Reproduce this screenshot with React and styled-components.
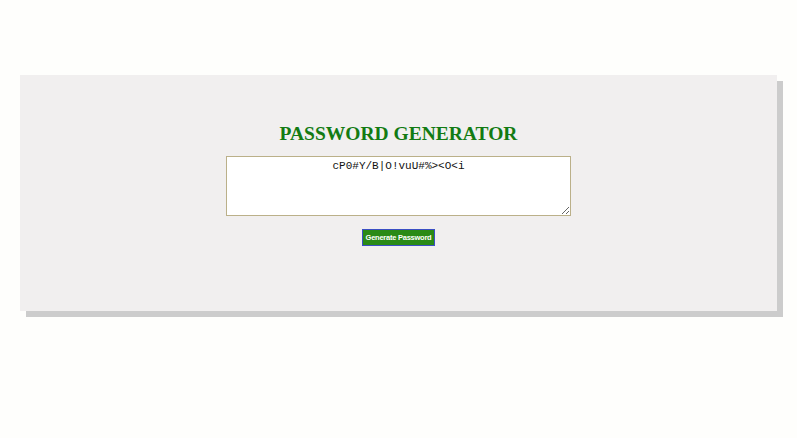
import React, { useState } from "react";
import styled, { createGlobalStyle } from "styled-components";

const GlobalStyle = createGlobalStyle`
  html, body {
    margin: 0;
    min-height: 100%;
    background: #fefefc;
    font-family: "Liberation Serif", serif;
  }
  #root {
    min-height: 100vh;
    padding-top: 75px;
    padding-bottom: 20px;
    box-sizing: border-box;
  }
`;

const Card = styled.div`
  margin: 0 20px;
  height: 236px;
  box-sizing: border-box;
  padding-top: 48px;
  background: #f1efef;
  box-shadow: 6px 6px 0 0 #cccccc;
  display: flex;
  flex-direction: column;
  align-items: center;
`;

const Title = styled.h1`
  margin: 0 0 11px 0;
  font-family: "Liberation Serif", "Times New Roman", serif;
  font-size: 19.5px;
  line-height: 22px;
  font-weight: bold;
  color: #137b13;
`;

const Output = styled.textarea`
  width: 345px;
  height: 60px;
  box-sizing: border-box;
  border: 1px solid #bbb089;
  background: #ffffff;
  font-family: "Liberation Mono", "Courier New", monospace;
  font-size: 11px;
  text-align: center;
  color: #111;
  padding: 3px 2px;
  margin: 0;
  resize: vertical;
`;

const GenButton = styled.button`
  margin-top: 13px;
  width: 73px;
  height: 17px;
  padding: 0;
  background: #2a8a16;
  border: 1px solid #3b4fc4;
  color: #ffffff;
  font-family: "Liberation Sans", Arial, sans-serif;
  font-size: 7.5px;
  letter-spacing: -0.25px;
  font-weight: bold;
  white-space: nowrap;
  cursor: pointer;
`;

export default function App() {
  const [pw] = useState("cP0#Y/B|O!vuU#%><O<i");
  return (
    <>
      <GlobalStyle />
      <Card>
        <Title>PASSWORD GENERATOR</Title>
        <Output value={pw} readOnly />
        <GenButton>Generate Password</GenButton>
      </Card>
    </>
  );
}
